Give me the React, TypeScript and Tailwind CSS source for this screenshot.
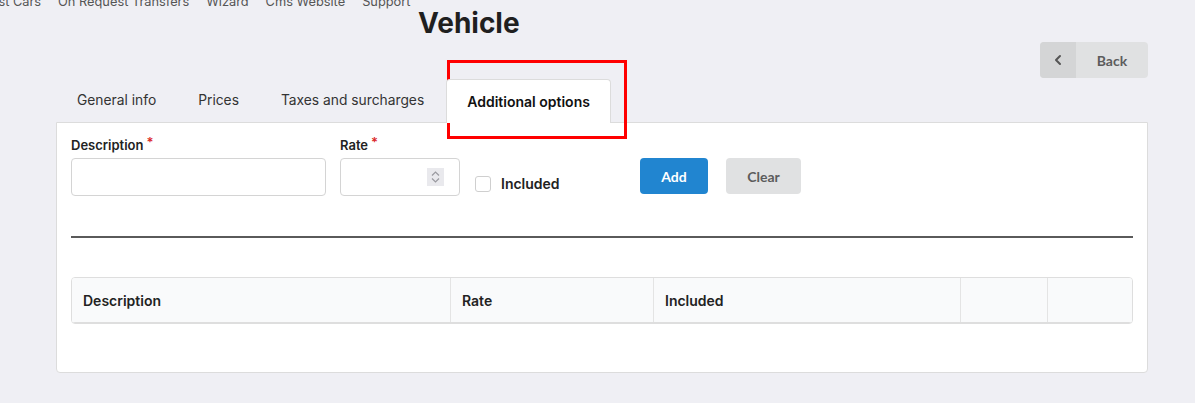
import React from "react";

const navItems = ["Fast Cars", "On Request Transfers", "Wizard", "Cms Website", "Support"];
const tabs = ["General info", "Prices", "Taxes and surcharges", "Additional options"];

export default function App() {
  const active = "Additional options";

  return (
    <div className="relative w-[1195px] h-[403px] overflow-hidden bg-[#efeff4] font-['Inter',sans-serif] text-[#222]">
      {/* top nav, scrolled partly out of view */}
      <div className="flex gap-[17px] h-4 mt-[-6px] ml-[-16px] text-[12.8px] leading-4 text-[#555]">
        {navItems.map((item) => (
          <span key={item} className="whitespace-nowrap">{item}</span>
        ))}
      </div>

      <h1 className="ml-[418px] mt-[-4px] h-[34px] text-[28px] leading-[34px] font-bold text-[#1f1f1f]">Vehicle</h1>

      <div className="flex justify-end pr-[47px] mt-[2px]">
        <button className="flex h-9 w-[108px] rounded-[4px] overflow-hidden bg-[#e0e1e2] font-['Lato',sans-serif] text-[14px] font-bold text-[#5c5c5c]">
          <span className="flex w-9 h-9 items-center justify-center bg-[#d4d5d6]">
            <svg width="12" height="12" viewBox="0 0 12 12" fill="none" stroke="#555" strokeWidth="2" strokeLinecap="round" strokeLinejoin="round">
              <path d="M8 2 4 6l4 4" />
            </svg>
          </span>
          <span className="flex-1 flex items-center justify-center">Back</span>
        </button>
      </div>

      {/* tabs */}
      <div className="flex ml-[56px] mt-[1px] h-[43px] text-[13.8px]">
        {tabs.map((t) =>
          t === active ? (
            <div key={t} className="relative z-10 -mb-px ml-[1px] flex items-center px-[20px] bg-white border border-b-0 border-[#dcdcdc] rounded-t-[4px] text-[14px] font-semibold text-[#111]">
              {t}
            </div>
          ) : (
            <div key={t} className="flex items-center px-[21px] text-[#333]">
              {t}
            </div>
          )
        )}
      </div>

      {/* panel */}
      <div className="ml-[56px] w-[1092px] h-[251px] bg-white border border-[#dcdcdc] rounded-b-[4px] pt-[14px] px-[14px]">
        <div className="flex items-start">
          <div className="w-[255px] mr-[14px]">
            <label className="block h-4 text-[13px] leading-4 font-semibold text-[#222]">
              Description<span className="ml-[3px] text-[#db2828] relative top-[-3px]">*</span>
            </label>
            <input className="mt-[5px] block w-full h-[38px] rounded-[4px] border border-[#d4d4d4] bg-white outline-none" />
          </div>
          <div className="w-[120px]">
            <label className="block h-4 text-[13px] leading-4 font-semibold text-[#222]">
              Rate<span className="ml-[3px] text-[#db2828] relative top-[-3px]">*</span>
            </label>
            <div className="relative mt-[5px]">
              <input className="block w-full h-[38px] rounded-[4px] border border-[#d4d4d4] bg-white outline-none" />
              <div className="absolute left-[87px] top-[10px] w-[17px] h-[18px] bg-[#e9e9ed] flex flex-col items-center justify-center gap-[2px]">
                <svg width="9" height="5" viewBox="0 0 9 5" fill="none" stroke="#9a9aa0" strokeWidth="1.2">
                  <path d="M1 4.5 4.5 1 8 4.5" />
                </svg>
                <svg width="9" height="5" viewBox="0 0 9 5" fill="none" stroke="#9a9aa0" strokeWidth="1.2">
                  <path d="M1 0.5 4.5 4 8 0.5" />
                </svg>
              </div>
            </div>
          </div>
          <div className="w-[165px] ml-[15px] mt-[37px] h-5 flex items-center gap-[10px]">
            <span className="w-4 h-4 rounded-[3px] border border-[#cfcfcf] bg-white" />
            <span className="text-[14px] leading-5 font-semibold text-[#222]">Included</span>
          </div>
          <button className="mt-[21px] w-[68px] h-9 rounded-[4px] bg-[#2185d0] text-white font-['Lato',sans-serif] text-[14px] font-bold">
            Add
          </button>
          <button className="mt-[21px] ml-[18px] w-[75px] h-9 rounded-[4px] bg-[#e0e1e2] text-[#5c5c5c] font-['Lato',sans-serif] text-[14px] font-bold">
            Clear
          </button>
        </div>

        <div className="mt-[40px] h-[2px] bg-[#5a5a5a]" />

        <div className="mt-[39px] rounded-[4px] border border-[#dedede] overflow-hidden">
          <div className="grid grid-cols-[378px_203px_307px_87px_1fr] h-[45px] bg-[#f9fafb] border-b border-[#dedede] text-[14px] font-semibold text-[#222]">
            <div className="flex items-center pl-[11px]">Description</div>
            <div className="flex items-center pl-[11px] border-l border-[#e4e4e4]">Rate</div>
            <div className="flex items-center pl-[11px] border-l border-[#e4e4e4]">Included</div>
            <div className="border-l border-[#e4e4e4]" />
            <div className="border-l border-[#e4e4e4]" />
          </div>
        </div>
      </div>

      {/* annotation highlight */}
      <div className="absolute left-[447px] top-[60px] w-[180px] h-[79px] border-[3px] border-[#ff0000] pointer-events-none" />
    </div>
  );
}
